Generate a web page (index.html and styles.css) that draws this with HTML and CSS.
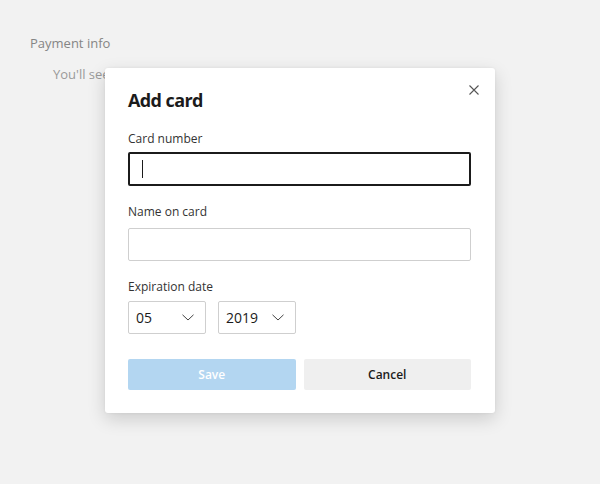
FILE: index.html
```html
<!DOCTYPE html>
<html lang="en">
<head>
<meta charset="utf-8">
<title>Add card</title>
<link rel="stylesheet" href="styles.css">
</head>
<body>
<main class="page">
  <h2 class="section-title">Payment info</h2>
  <p class="section-text">You'll see your saved payment methods here</p>
</main>
<div class="overlay">
  <div class="dialog" role="dialog" aria-labelledby="dlg-title">
    <div class="dialog-header">
      <h1 class="dialog-title" id="dlg-title">Add card</h1>
      <button class="close-btn" aria-label="Close">
        <svg width="10" height="10" viewBox="0 0 10 10"><path d="M0.5 0.5 L9.5 9.5 M9.5 0.5 L0.5 9.5" stroke="#555" stroke-width="1.1" fill="none"/></svg>
      </button>
    </div>
    <div class="field field-first">
      <div class="label">Card number</div>
      <div class="input input-focused"><span class="caret"></span></div>
    </div>
    <div class="field">
      <div class="label">Name on card</div>
      <div class="input"></div>
    </div>
    <div class="field field-exp">
      <div class="label">Expiration date</div>
      <div class="selects">
        <div class="select"><span>05</span>
          <svg class="chev" width="12" height="7" viewBox="0 0 12 7"><path d="M0.5 0.8 L6 6 L11.5 0.8" stroke="#444" stroke-width="1" fill="none"/></svg>
        </div>
        <div class="select"><span>2019</span>
          <svg class="chev" width="12" height="7" viewBox="0 0 12 7"><path d="M0.5 0.8 L6 6 L11.5 0.8" stroke="#444" stroke-width="1" fill="none"/></svg>
        </div>
      </div>
    </div>
    <div class="actions">
      <button class="btn btn-save">Save</button>
      <button class="btn btn-cancel">Cancel</button>
    </div>
  </div>
</div>
</body>
</html>
```
FILE: styles.css
```css
html, body {
  margin: 0;
  padding: 0;
}
body {
  width: 600px;
  height: 484px;
  background: #f2f2f2;
  font-family: "Open Sans", "Noto Sans", sans-serif;
  overflow: hidden;
  position: relative;
}
.page {
  padding: 33px 0 0 30px;
}
.section-title {
  margin: 0;
  font-size: 13px;
  font-weight: 400;
  line-height: 20px;
  color: #858585;
}
.section-text {
  margin: 12px 0 0 23px;
  font-size: 13px;
  line-height: 18px;
  color: #9a9a9a;
}
.overlay {
  position: absolute;
  inset: 0;
  display: flex;
  justify-content: center;
  align-items: flex-start;
}
.dialog {
  margin-top: 68px;
  width: 343px;
  padding: 20px 24px 23px 23px;
  background: #fff;
  border-radius: 3px;
  box-shadow: 0 6px 18px rgba(0, 0, 0, 0.16), 0 0 3px rgba(0, 0, 0, 0.06);
}
.dialog-header {
  display: flex;
  justify-content: space-between;
  align-items: flex-start;
}
.dialog-title {
  margin: 0;
  font-size: 18px;
  font-weight: 700;
  line-height: 24px;
  color: #1b1b1b;
  letter-spacing: -0.6px;
}
.close-btn {
  margin: -6px -11px 0 0;
  padding: 0;
  width: 16px;
  height: 16px;
  border: none;
  background: transparent;
  display: flex;
  align-items: center;
  justify-content: center;
}
.field {
  margin-top: 18px;
}
.field-first {
  margin-top: 19px;
}
.label {
  font-size: 12px;
  line-height: 16px;
  color: #333;
}
.input {
  box-sizing: border-box;
  margin-top: 8px;
  height: 33px;
  border: 1px solid #cfcfcf;
  border-radius: 2px;
  background: #fff;
  display: flex;
  align-items: center;
}
.input-focused {
  margin-top: 5px;
  height: 34px;
  border: 2px solid #1b1b1b;
}
.caret {
  display: block;
  width: 1px;
  height: 18px;
  margin-left: 12px;
  background: #1b1b1b;
}
.field-exp .label {
  margin-bottom: 6px;
}
.selects {
  display: flex;
  gap: 12px;
}
.select {
  box-sizing: border-box;
  width: 78px;
  height: 33px;
  border: 1px solid #cfcfcf;
  border-radius: 2px;
  display: flex;
  align-items: center;
  justify-content: space-between;
  padding: 0 11px 0 7px;
  font-size: 14px;
  color: #1b1b1b;
}
.chev {
  display: block;
}
.actions {
  margin-top: 25px;
  display: flex;
  gap: 8px;
}
.btn {
  flex: 1;
  height: 31px;
  border: none;
  border-radius: 2px;
  font-family: "Open Sans", "Noto Sans", sans-serif;
  font-size: 12px;
  font-weight: 600;
  padding: 0;
}
.btn-save {
  background: #b3d6f1;
  color: #fff;
}
.btn-cancel {
  background: #efefef;
  color: #1b1b1b;
}
```
